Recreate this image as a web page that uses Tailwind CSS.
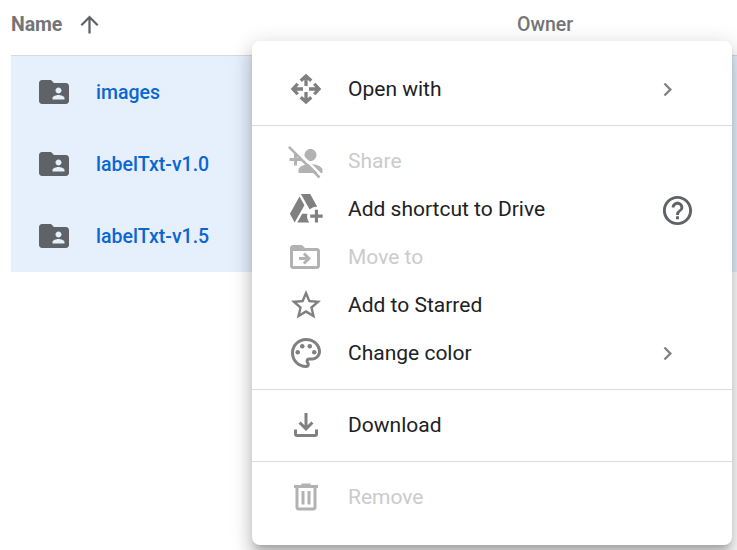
<!DOCTYPE html>
<html lang="en">
<head>
<meta charset="utf-8">
<title>Drive</title>
<script src="https://cdn.jsdelivr.net/npm/@tailwindcss/browser@4"></script>
</head>
<body class="relative h-[550px] w-[737px] overflow-hidden bg-white font-['Roboto',sans-serif]">
<svg class="hidden">
  <symbol id="folder" viewBox="0 0 24 24"><path d="M20 6h-8l-2-2H4c-1.1 0-1.99.9-1.99 2L2 18c0 1.1.9 2 2 2h16c1.1 0 2-.9 2-2V8c0-1.1-.9-2-2-2zm-5 3c1.1 0 2 .9 2 2s-.9 2-2 2-2-.9-2-2 .9-2 2-2zm4 8h-8v-1c0-1.33 2.67-2 4-2s4 .67 4 2v1z"/></symbol>
  <symbol id="chevron" viewBox="0 0 24 24"><path d="M10 6L8.59 7.41 13.17 12l-4.58 4.59L10 18l6-6z"/></symbol>
</svg>

<main class="flex flex-col pl-[11px]">
  <header class="flex h-[56px] items-center border-b border-[#d5dae0] pb-[7px] text-[19.5px] font-medium text-[#757575]">
    <div class="flex w-[506px] items-center">
      <span class="w-[65px] pt-0.5 text-[19.5px] font-bold tracking-[-0.1px]">Name</span>
      <svg class="size-[27px] fill-[#5f6368]" viewBox="0 0 24 24"><path d="M4 12l1.41 1.41L11 7.83V20h2V7.83l5.58 5.59L20 12l-8-8-8 8z"/></svg>
    </div>
    <span class="pt-0.5">Owner</span>
  </header>
  <div class="bg-[#e6f0fd] text-[19.5px] font-medium text-[#0b66d2]">
    <div class="flex h-[72px] items-center gap-6 pl-[25px]"><svg class="size-9 fill-[#5f6368]"><use href="#folder"/></svg><span class="pt-0.5">images</span></div>
    <div class="flex h-[72px] items-center gap-6 pl-[25px]"><svg class="size-9 fill-[#5f6368]"><use href="#folder"/></svg><span class="pt-0.5">labelTxt-v1.0</span></div>
    <div class="flex h-[72px] items-center gap-6 pl-[25px]"><svg class="size-9 fill-[#5f6368]"><use href="#folder"/></svg><span class="pt-0.5">labelTxt-v1.5</span></div>
  </div>
</main>

<nav class="absolute left-[252px] top-[41px] flex h-[504px] w-[480px] flex-col rounded-[8px] bg-white py-6 text-[21px] text-[#202124] shadow-[0_7.5px_7.5px_-4.5px_rgba(0,0,0,0.2),0_12px_15px_1.5px_rgba(0,0,0,0.14),0_4.5px_21px_3px_rgba(0,0,0,0.12)]">
  <div class="flex h-12 items-center gap-6 pl-9 pr-[51px]">
    <svg class="size-9" viewBox="0 0 24 24" fill="none" stroke="#808080" stroke-width="2.2"><path d="M12 10V3.6M8.5 6.500L12 3.300l3.500 3.200M12 14v6.400M8.500 17.500l3.500 3.200 3.500-3.200M10 12H3.600M6.500 8.500L3.300 12l3.200 3.500M14 12h6.400M17.500 8.500l3.200 3.500-3.200 3.500"/></svg>
    <span class="grow pt-0.5">Open with</span>
    <svg class="size-[27px] fill-[#808080]"><use href="#chevron"/></svg>
  </div>
  <hr class="my-3 -mb-px h-px border-0 bg-[#dadce0]">
  <div class="mt-3 flex h-12 items-center gap-6 pl-9 text-[#cbcbcb]">
    <svg class="size-9 overflow-visible" viewBox="0 0 24 24" fill="#b2b2b2"><path d="M15 12c2.21 0 4-1.79 4-4s-1.79-4-4-4-4 1.790-4 4 1.790 4 4 4zm-9-2V7H4v3H1v2h3v3h2v-3h3v-2H6zm9 4c-2.670 0-8 1.340-8 4v2h16v-2c0-2.660-5.330-4-8-4z"/><path d="M2.100 1.300L23 22.200" stroke="#fff" stroke-width="1.600"/><path d="M.6 2.600L21 23.000" stroke="#b2b2b2" stroke-width="1.700"/></svg>
    <span class="pt-0.5">Share</span>
  </div>
  <div class="flex h-12 items-center gap-6 pl-9 pr-[37.5px]">
    <svg class="size-9" viewBox="0 0 24 24" fill="#808080"><path transform="translate(-.8 -1.150) scale(1.040 1.055)" d="M19 11c.17 0 .33.01.49.02L15 3H9l5.680 9.840C15.770 11.710 17.300 11 19 11zM8.150 4.520L2 15.500 5 21l6.330-10.970zM13.200 15.500H9.900L6.730 21h7.810C13.580 19.940 13 18.540 13 17c0-.52.07-1.020.2-1.500zM20 16v-3h-2v3h-3v2h3v3h2v-3h3v-2z"/></svg>
    <span class="grow pt-0.5">Add shortcut to Drive</span>
    <svg class="mt-[3px] size-[35px] fill-[#5f6368]" viewBox="0 0 24 24"><path d="M11 18h2v-2h-2v2zm1-16C6.480 2 2 6.480 2 12s4.480 10 10 10 10-4.480 10-10S17.520 2 12 2zm0 18c-4.410 0-8-3.590-8-8s3.590-8 8-8 8 3.590 8 8-3.590 8-8 8zm0-14c-2.210 0-4 1.790-4 4h2c0-1.100.9-2 2-2s2 .9 2 2c0 2-3 1.750-3 5h2c0-2.250 3-2.500 3-5 0-2.210-1.790-4-4-4z"/></svg>
  </div>
  <div class="flex h-12 items-center gap-[25px] pl-[35px] text-[#cbcbcb]">
    <svg class="size-9" viewBox="0 0 24 24" fill="#b2b2b2"><path fill-rule="evenodd" d="M20 6h-8l-2-2H4c-1.100 0-2 .9-2 2v12c0 1.100.9 2 2 2h16c1.100 0 2-.9 2-2V8c0-1.100-.9-2-2-2zM20 18H4V8h16zM12.160 12H8v2h4.160l-1.590 1.590L11.990 17 16 13.010 11.990 9l-1.410 1.410z"/></svg>
    <span class="pt-0.5">Move to</span>
  </div>
  <div class="flex h-12 items-center gap-6 pl-9">
    <svg class="size-9" viewBox="0 0 24 24" fill="#808080"><path d="M22 9.240l-7.190-.62L12 2 9.190 8.630 2 9.240l5.460 4.730L5.820 21 12 17.270 18.180 21l-1.630-7.030L22 9.240zM12 15.400l-3.760 2.270 1-4.280-3.320-2.880 4.380-.38L12 6.100l1.710 4.040 4.380.38-3.320 2.880 1 4.280L12 15.400z"/></svg>
    <span class="pt-0.5">Add to Starred</span>
  </div>
  <div class="flex h-12 items-center gap-6 pl-9 pr-[51px]">
    <svg class="size-9" viewBox="0 0 24 24" fill="#808080"><path d="M12 22C6.490 22 2 17.510 2 12S6.490 2 12 2s10 4.040 10 9c0 3.310-2.690 6-6 6h-1.770c-.28 0-.5.22-.5.5 0 .12.05.23.13.33.41.47.64 1.060.64 1.670A2.500 2.500 0 0 1 12 22zm0-18c-4.410 0-8 3.590-8 8s3.590 8 8 8c.28 0 .5-.22.5-.5a.54.54 0 0 0-.14-.35c-.41-.46-.63-1.050-.63-1.650a2.500 2.500 0 0 1 2.500-2.500H16c2.210 0 4-1.790 4-4 0-3.860-3.590-7-8-7z"/><circle cx="6.500" cy="11.500" r="1.500"/><circle cx="9.500" cy="7.500" r="1.500"/><circle cx="14.500" cy="7.500" r="1.500"/><circle cx="17.500" cy="11.500" r="1.500"/></svg>
    <span class="grow pt-0.5">Change color</span>
    <svg class="size-[27px] fill-[#808080]"><use href="#chevron"/></svg>
  </div>
  <hr class="my-3 -mb-px h-px border-0 bg-[#dadce0]">
  <div class="mt-3 flex h-12 items-center gap-6 pl-9">
    <svg class="size-9" viewBox="0 0 24 24" fill="#808080"><path d="M4 15v3a2 2 0 0 0 2 2h12a2 2 0 0 0 2-2v-3h-2v3H6v-3zM17 11l-1.410-1.410L13 12.170V4h-2v8.170L8.410 9.590 7 11l5 5z"/></svg>
    <span class="pt-0.5">Download</span>
  </div>
  <hr class="my-3 -mb-px h-px border-0 bg-[#dadce0]">
  <div class="mt-3 flex h-12 items-center gap-6 pl-9 text-[#cbcbcb]">
    <svg class="size-9" viewBox="0 0 24 24" fill="#b2b2b2"><path d="M15 4V3H9v1H4v2h1v13c0 1.100.9 2 2 2h10c1.100 0 2-.9 2-2V6h1V4h-5zm2 15H7V6h10v13zM9 8h2v9H9zm4 0h2v9h-2z"/></svg>
    <span class="pt-0.5">Remove</span>
  </div>
</nav>
</body>
</html>
